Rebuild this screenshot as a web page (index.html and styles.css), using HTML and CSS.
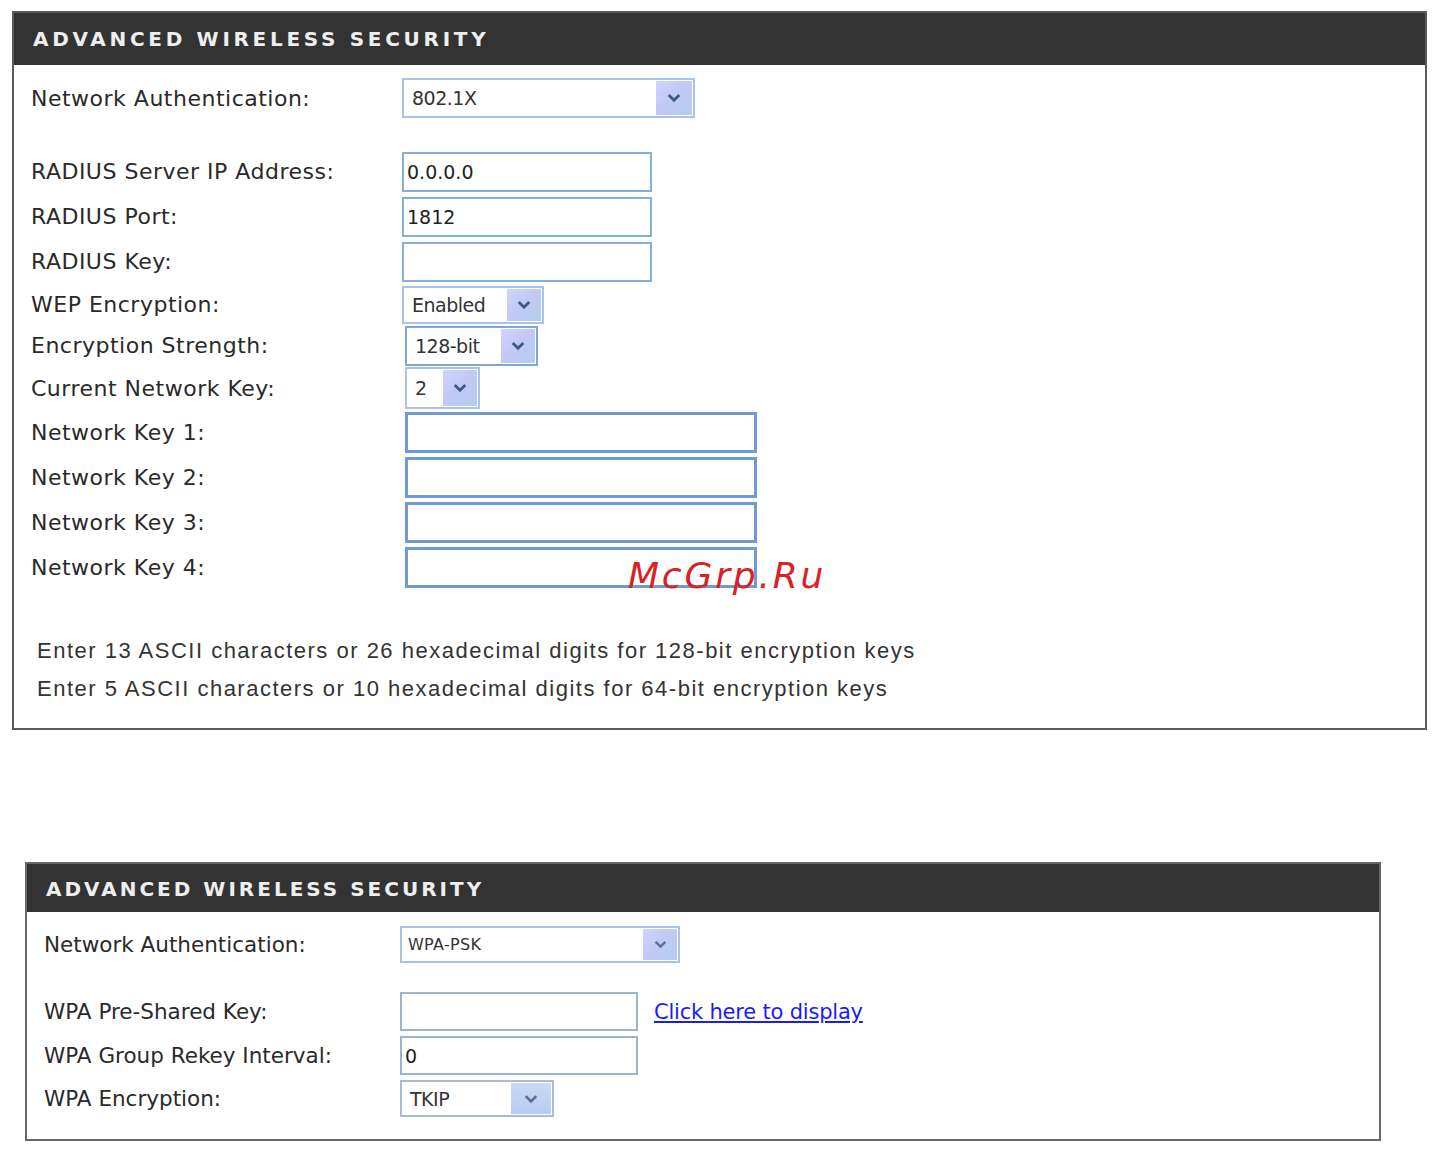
FILE: index.html
```html
<!DOCTYPE html>
<html lang="en">
<head>
  <meta charset="UTF-8" />
  <title>Advanced Wireless Security</title>
  <link rel="stylesheet" href="styles.css">
</head>
<body>
  <!-- 802.1X / WEP settings -->
  <div class="panel panel-wep">
    <div class="panel-head">ADVANCED WIRELESS SECURITY</div>
    <div class="panel-body">
      <div class="row row-auth">
        <span class="label">Network Authentication:</span>
        <div class="select sel-auth"><span class="val">802.1X</span><span class="arrow"><svg viewBox="0 0 12 8" width="14" height="10"><path d="M1.5 1.5 L6 6 L10.5 1.5" fill="none" stroke="#3d5a86" stroke-width="2.4"/></svg></span></div>
      </div>

      <div class="row row-field">
        <span class="label">RADIUS Server IP Address:</span>
        <input class="text text-radius" type="text" value="0.0.0.0" />
      </div>
      <div class="row row-field">
        <span class="label">RADIUS Port:</span>
        <input class="text text-radius" type="text" value="1812" />
      </div>
      <div class="row row-field">
        <span class="label">RADIUS Key:</span>
        <input class="text text-radius" type="text" value="" />
      </div>

      <div class="row row-sel">
        <span class="label">WEP Encryption:</span>
        <div class="select sel-wep"><span class="val">Enabled</span><span class="arrow"><svg viewBox="0 0 12 8" width="14" height="10"><path d="M1.5 1.5 L6 6 L10.5 1.5" fill="none" stroke="#3d5a86" stroke-width="2.4"/></svg></span></div>
      </div>
      <div class="row row-sel">
        <span class="label">Encryption Strength:</span>
        <div class="select sel-strength"><span class="val">128-bit</span><span class="arrow"><svg viewBox="0 0 12 8" width="14" height="10"><path d="M1.5 1.5 L6 6 L10.5 1.5" fill="none" stroke="#3d5a86" stroke-width="2.4"/></svg></span></div>
      </div>
      <div class="row row-cur">
        <span class="label">Current Network Key:</span>
        <div class="select sel-cur"><span class="val">2</span><span class="arrow"><svg viewBox="0 0 12 8" width="14" height="10"><path d="M1.5 1.5 L6 6 L10.5 1.5" fill="none" stroke="#3d5a86" stroke-width="2.4"/></svg></span></div>
      </div>

      <div class="row row-field">
        <span class="label">Network Key 1:</span>
        <input class="text text-key" type="text" value="" />
      </div>
      <div class="row row-field">
        <span class="label">Network Key 2:</span>
        <input class="text text-key" type="text" value="" />
      </div>
      <div class="row row-field">
        <span class="label">Network Key 3:</span>
        <input class="text text-key" type="text" value="" />
      </div>
      <div class="row row-field">
        <span class="label">Network Key 4:</span>
        <input class="text text-key" type="text" value="" />
      </div>

      <div class="notes">
        <p>Enter 13 ASCII characters or 26 hexadecimal digits for 128-bit encryption keys</p>
        <p>Enter 5 ASCII characters or 10 hexadecimal digits for 64-bit encryption keys</p>
      </div>
    </div>
    <span class="stamp">McGrp.Ru</span>
  </div>

  <!-- WPA-PSK settings -->
  <div class="panel panel-wpa">
    <div class="panel-head">ADVANCED WIRELESS SECURITY</div>
    <div class="panel-body">
      <div class="row row-auth2">
        <span class="label">Network Authentication:</span>
        <div class="select sel-auth2"><span class="val small">WPA-PSK</span><span class="arrow"><svg viewBox="0 0 12 8" width="13" height="9"><path d="M1.5 1.5 L6 6 L10.5 1.5" fill="none" stroke="#5a6f96" stroke-width="2.2"/></svg></span></div>
      </div>
      <div class="row row-wpa">
        <span class="label">WPA Pre-Shared Key:</span>
        <input class="text text-wpa" type="text" value="" />
        <a class="show-link" href="#">Click here to display</a>
      </div>
      <div class="row row-wpa">
        <span class="label">WPA Group Rekey Interval:</span>
        <input class="text text-wpa" type="text" value="0" />
      </div>
      <div class="row row-wpa">
        <span class="label">WPA Encryption:</span>
        <div class="select sel-tkip"><span class="val">TKIP</span><span class="arrow"><svg viewBox="0 0 12 8" width="14" height="10"><path d="M1.5 1.5 L6 6 L10.5 1.5" fill="none" stroke="#5a6f96" stroke-width="2.2"/></svg></span></div>
      </div>
    </div>
  </div>
</body>
</html>
```

FILE: styles.css
```css
body {
  margin: 0;
  background: #fff;
  font-family: "DejaVu Sans", Verdana, sans-serif;
  color: #222;
}
.panel {
  position: relative;
  border: 2px solid #5a5a5a;
  background: #fff;
}
.panel-wep {
  margin: 11px 0 0 12px;
  width: 1411px;
  height: 715px;
}
.panel-wpa {
  margin: 132px 0 0 25px;
  width: 1352px;
  height: 275px;
  border-color: #666;
}
.panel-head {
  background: #333;
  color: #eee;
  font-weight: bold;
  font-size: 20px;
  letter-spacing: 3.7px;
  height: 52px;
  line-height: 52px;
  padding-left: 19px;
}
.panel-wpa .panel-head {
  height: 48px;
  line-height: 50px;
  letter-spacing: 3px;
}
.panel-body {
  padding: 0 0 0 17px;
}
.row {
  display: flex;
  align-items: center;
}
.label {
  font-size: 22px;
  letter-spacing: 0.5px;
  width: 371px;
  flex: none;
  color: #2a2a2a;
}
.panel-wpa .label {
  width: 356px;
  font-size: 21.5px;
  letter-spacing: 0;
}
.row-auth { height: 66px; }
.row-auth + .row-field { margin-top: 18px; }
.row-field { height: 45px; }
.row-sel { height: 41px; }
.row-cur { height: 44px; }

.text {
  box-sizing: border-box;
  height: 40px;
  border: 2px solid #86aedb;
  background: #fff;
  font-family: "DejaVu Sans", Verdana, sans-serif;
  font-size: 19px;
  padding: 0 3px;
  color: #222;
  margin: 0;
}
.text-radius { width: 250px; }
.text-key {
  width: 352px;
  height: 41px;
  margin-left: 3px;
  border: 3px solid #6f9bd0;
}
.text-wpa {
  width: 238px;
  height: 39px;
  border-color: #9eb4cc;
}

.select {
  box-sizing: border-box;
  display: flex;
  align-items: stretch;
  border: 2px solid #a9c3e6;
  background: #fff;
  height: 40px;
}
.select .val {
  flex: 1;
  display: flex;
  align-items: center;
  padding-left: 8px;
  font-size: 19px;
  letter-spacing: -0.5px;
  color: #333;
}
.select .val.small {
  font-size: 16px;
  letter-spacing: 0.3px;
  padding-left: 6px;
}
.select .arrow {
  width: 36px;
  display: flex;
  align-items: center;
  justify-content: center;
  background: linear-gradient(135deg, #cfd4fb 0%, #c4c8f6 45%, #b3cdf0 100%);
  margin: 1px 1px 1px 0;
}
.sel-auth { width: 293px; }
.sel-wep { width: 142px; height: 38px; }
.sel-strength { width: 133px; margin-left: 3px; height: 40px; border-width: 2px; border-color: #7ea6d8; }
.sel-cur { width: 75px; margin-left: 3px; height: 42px; }
.sel-wep .arrow, .sel-strength .arrow, .sel-cur .arrow { width: 34px; }
.sel-auth2 { width: 280px; height: 37px; }
.sel-auth2 .arrow { width: 34px; }
.sel-tkip { width: 154px; height: 37px; border-color: #a8bcd8; }
.sel-tkip .arrow { width: 40px; background: linear-gradient(180deg, #c9d8f6, #b7cdf0); }

.notes {
  margin-top: 42px;
  padding-left: 6px;
  font-family: "Liberation Sans", Arial, sans-serif;
  font-size: 22px;
  letter-spacing: 1.5px;
  color: #333;
}
.notes p {
  margin: 0;
  height: 38px;
  line-height: 38px;
}

.row-auth2 { height: 64px; }
.row-auth2 + .row-wpa { margin-top: 13px; height: 45px; }
.row-wpa { height: 43px; }
.show-link {
  margin-left: 16px;
  color: #1a1aff;
  font-size: 21px;
  letter-spacing: -0.2px;
}

/* red site stamp over the key fields */
.stamp {
  position: absolute;
  left: 614px;
  top: 542px;
  font-family: "DejaVu Sans", sans-serif;
  font-style: italic;
  font-size: 36px;
  color: #d62228;
  letter-spacing: 2.8px;
}
```
